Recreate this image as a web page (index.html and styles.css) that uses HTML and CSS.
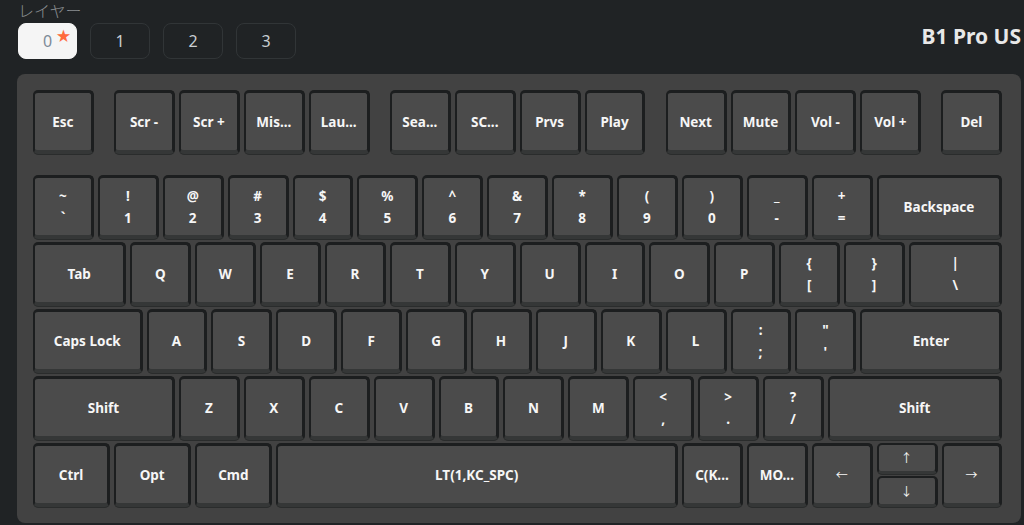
FILE: index.html
```html
<!DOCTYPE html>
<html lang="ja">
<head>
  <meta charset="UTF-8" />
  <title>B1 Pro US</title>
  <link rel="stylesheet" href="styles.css">
</head>
<body>
  <div class="top-bar">
    <div class="layer-section">
      <div class="layer-label">レイヤー</div>
      <div class="layer-buttons">
        <button class="layer-btn active">0<span class="star">★</span></button>
        <button class="layer-btn">1</button>
        <button class="layer-btn">2</button>
        <button class="layer-btn">3</button>
      </div>
    </div>
    <div class="device-name">B1 Pro US</div>
  </div>

  <div class="board">
    <div class="row fn-row">
      <div class="key">Esc</div>
      <div class="key skip">Scr -</div>
      <div class="key">Scr +</div>
      <div class="key">Mis...</div>
      <div class="key">Lau...</div>
      <div class="key skip">Sea...</div>
      <div class="key">SC...</div>
      <div class="key">Prvs</div>
      <div class="key">Play</div>
      <div class="key skip">Next</div>
      <div class="key">Mute</div>
      <div class="key">Vol -</div>
      <div class="key">Vol +</div>
      <div class="key skip">Del</div>
    </div>

    <div class="row">
      <div class="key dual"><span>~</span><span>`</span></div>
      <div class="key dual"><span>!</span><span>1</span></div>
      <div class="key dual"><span>@</span><span>2</span></div>
      <div class="key dual"><span>#</span><span>3</span></div>
      <div class="key dual"><span>$</span><span>4</span></div>
      <div class="key dual"><span>%</span><span>5</span></div>
      <div class="key dual"><span>^</span><span>6</span></div>
      <div class="key dual"><span>&amp;</span><span>7</span></div>
      <div class="key dual"><span>*</span><span>8</span></div>
      <div class="key dual"><span>(</span><span>9</span></div>
      <div class="key dual"><span>)</span><span>0</span></div>
      <div class="key dual"><span>_</span><span>-</span></div>
      <div class="key dual"><span>+</span><span>=</span></div>
      <div class="key w2">Backspace</div>
    </div>

    <div class="row">
      <div class="key w15">Tab</div>
      <div class="key">Q</div>
      <div class="key">W</div>
      <div class="key">E</div>
      <div class="key">R</div>
      <div class="key">T</div>
      <div class="key">Y</div>
      <div class="key">U</div>
      <div class="key">I</div>
      <div class="key">O</div>
      <div class="key">P</div>
      <div class="key dual"><span>{</span><span>[</span></div>
      <div class="key dual"><span>}</span><span>]</span></div>
      <div class="key dual w15"><span>|</span><span>\</span></div>
    </div>

    <div class="row">
      <div class="key w175">Caps Lock</div>
      <div class="key">A</div>
      <div class="key">S</div>
      <div class="key">D</div>
      <div class="key">F</div>
      <div class="key">G</div>
      <div class="key">H</div>
      <div class="key">J</div>
      <div class="key">K</div>
      <div class="key">L</div>
      <div class="key dual"><span>:</span><span>;</span></div>
      <div class="key dual"><span>"</span><span>'</span></div>
      <div class="key w225">Enter</div>
    </div>

    <div class="row">
      <div class="key w225">Shift</div>
      <div class="key">Z</div>
      <div class="key">X</div>
      <div class="key">C</div>
      <div class="key">V</div>
      <div class="key">B</div>
      <div class="key">N</div>
      <div class="key">M</div>
      <div class="key dual"><span>&lt;</span><span>,</span></div>
      <div class="key dual"><span>&gt;</span><span>.</span></div>
      <div class="key dual"><span>?</span><span>/</span></div>
      <div class="key w275">Shift</div>
    </div>

    <div class="row">
      <div class="key w125">Ctrl</div>
      <div class="key w125">Opt</div>
      <div class="key w125">Cmd</div>
      <div class="key w625">LT(1,KC_SPC)</div>
      <div class="key">C(K...</div>
      <div class="key">MO...</div>
      <div class="key arrow">←</div>
      <div class="arrow-stack">
        <div class="key half arrow">↑</div>
        <div class="key half arrow">↓</div>
      </div>
      <div class="key arrow">→</div>
    </div>
  </div>
</body>
</html>
```

FILE: styles.css
```css
* {
  box-sizing: border-box;
  margin: 0;
  padding: 0;
}
body {
  --u: 64.9px;
  background-color: #202325;
  font-family: "Noto Sans", "Noto Sans CJK JP", sans-serif;
  padding: 0 3px 0 17px;
  width: 1024px;
  height: 525px;
  overflow: hidden;
}
.top-bar {
  display: flex;
  justify-content: space-between;
  align-items: flex-start;
  height: 74px;
}
.layer-section {
  padding-left: 1px;
}
.layer-label {
  font-family: "Noto Sans CJK JP", sans-serif;
  font-size: 16px;
  font-weight: 300;
  line-height: 16px;
  padding-top: 2px;
  color: #8a8e91;
  margin-bottom: 5px;
}
.layer-buttons {
  display: flex;
  gap: 13px;
}
.layer-btn {
  width: 60px;
  height: 36px;
  border: 1px solid #313537;
  border-radius: 8px;
  background: none;
  color: #c9ced2;
  font-family: "Noto Sans", sans-serif;
  font-size: 16px;
  position: relative;
}
.layer-btn.active {
  width: 59px;
  background-color: #f5f5f5;
  border-color: #f5f5f5;
  color: #7d8b98;
}
.star {
  position: absolute;
  top: 1px;
  left: 37px;
  font-size: 15px;
  color: #ff6b3d;
}
.device-name {
  margin-top: 22px;
  font-size: 21px;
  font-weight: 700;
  color: #e8e8e8;
}
.board {
  width: 1004px;
  height: 449px;
  background-color: #424242;
  border-radius: 8px;
  padding: 16px;
  display: flex;
  flex-direction: column;
  gap: 3px;
}
.row {
  display: flex;
  gap: 4px;
}
.fn-row {
  margin-bottom: 18px;
}
.key {
  width: calc(var(--u) - 4px);
  height: 64px;
  flex-shrink: 0;
  background-color: #4b4b4b;
  border: 2px solid #1c1e1f;
  border-top-width: 3px;
  border-right-width: 3px;
  border-bottom: 4px solid #353737;
  border-radius: 5px;
  box-shadow: 0 1px 0 #2a2c2c;
  color: #f6f6f6;
  font-size: 13.5px;
  font-weight: 700;
  display: flex;
  align-items: center;
  justify-content: center;
  white-space: nowrap;
}
.key.skip {
  margin-left: calc(var(--u) * 0.25);
}
.key.dual {
  flex-direction: column;
  line-height: 22px;
}
.key.w125 { width: calc(var(--u) * 1.25 - 4px); }
.key.w15 { width: calc(var(--u) * 1.5 - 4px); }
.key.w175 { width: calc(var(--u) * 1.75 - 4px); }
.key.w2 { width: calc(var(--u) * 2 - 4px); }
.key.w225 { width: calc(var(--u) * 2.25 - 4px); }
.key.w275 { width: calc(var(--u) * 2.75 - 4px); }
.key.w625 { width: calc(var(--u) * 6.25 - 4px); }
.key.arrow {
  font-size: 12px;
  font-weight: 400;
}
.arrow-stack {
  display: flex;
  flex-direction: column;
  gap: 2px;
}
.key.half {
  height: 31px;
  border-top-width: 2px;
  border-bottom-width: 3px;
}
```
